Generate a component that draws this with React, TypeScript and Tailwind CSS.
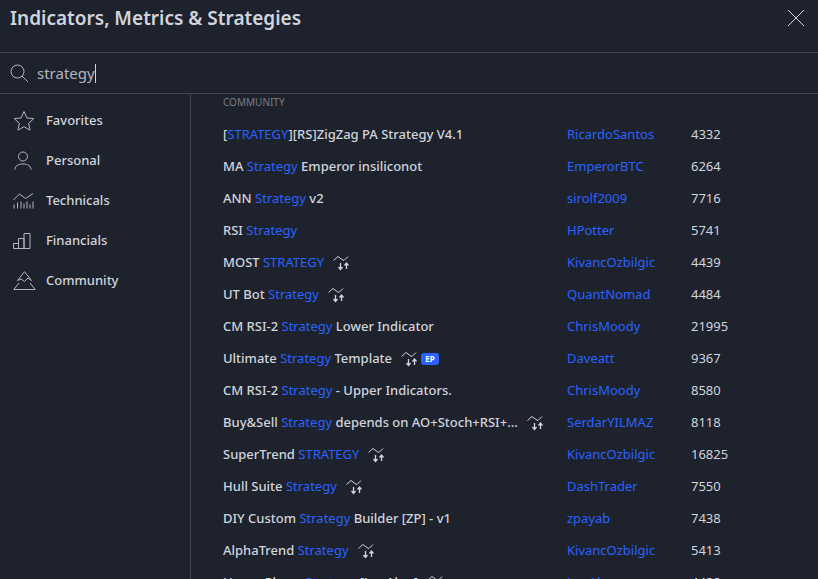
import React from "react"

const font = "font-['Noto_Sans','Open_Sans',sans-serif]"

type Part = string | { hl: string }
type Row = {
    title: Part[]
    author: string
    count: string
    strategy?: boolean
    ep?: boolean
}

const rows: Row[] = [
    { title: ["[", { hl: "STRATEGY" }, "][RS]ZigZag PA Strategy V4.1"], author: "RicardoSantos", count: "4332" },
    { title: ["MA ", { hl: "Strategy" }, " Emperor insiliconot"], author: "EmperorBTC", count: "6264" },
    { title: ["ANN ", { hl: "Strategy" }, " v2"], author: "sirolf2009", count: "7716" },
    { title: ["RSI ", { hl: "Strategy" }], author: "HPotter", count: "5741" },
    { title: ["MOST ", { hl: "STRATEGY" }], author: "KivancOzbilgic", count: "4439", strategy: true },
    { title: ["UT Bot ", { hl: "Strategy" }], author: "QuantNomad", count: "4484", strategy: true },
    { title: ["CM RSI-2 ", { hl: "Strategy" }, " Lower Indicator"], author: "ChrisMoody", count: "21995" },
    { title: ["Ultimate ", { hl: "Strategy" }, " Template"], author: "Daveatt", count: "9367", strategy: true, ep: true },
    { title: ["CM RSI-2 ", { hl: "Strategy" }, " - Upper Indicators."], author: "ChrisMoody", count: "8580" },
    { title: ["Buy&Sell ", { hl: "Strategy" }, " depends on AO+Stoch+RSI+..."], author: "SerdarYILMAZ", count: "8118", strategy: true },
    { title: ["SuperTrend ", { hl: "STRATEGY" }], author: "KivancOzbilgic", count: "16825", strategy: true },
    { title: ["Hull Suite ", { hl: "Strategy" }], author: "DashTrader", count: "7550", strategy: true },
    { title: ["DIY Custom ", { hl: "Strategy" }, " Builder [ZP] - v1"], author: "zpayab", count: "7438" },
    { title: ["AlphaTrend ", { hl: "Strategy" }], author: "KivancOzbilgic", count: "5413", strategy: true },
    { title: ["Heuer Phase ", { hl: "Strategy" }, " [LuxAlgo]"], author: "LuxAlgo", count: "4488", strategy: true },
]

function StrategyIcon() {
    return (
        <svg width="16" height="16" viewBox="0 0 16 16" fill="none" stroke="#d1d4dc" className="shrink-0">
            <path d="M.5 5.500 5 1.500 9 4.500 11 5.500 15 1.500" strokeWidth="1" />
            <path d="M7.500 8v6M5.500 12l2 2.500 2-2.500" strokeWidth="1.300" />
            <path d="M13.500 14V8M11.500 10.500l2-2.500 2 2.500" strokeWidth="1.300" />
        </svg>
    )
}

function StarIcon() {
    return (
        <svg width="22" height="22" viewBox="0 0 22 22" fill="none" stroke="#b2b5be">
            <path d="M11 1.500l2.900 6.400 6.800.8-5.100 4.600 1.500 6.900L11 16.700l-6.100 3.500 1.500-6.900L1.300 8.700l6.800-.8z" />
        </svg>
    )
}

function PersonIcon() {
    return (
        <svg width="20" height="20" viewBox="0 0 20 20" fill="none" stroke="#b2b5be">
            <circle cx="10" cy="5.500" r="4.500" />
            <path d="M2 18.500c0-3.500 3-5.500 8-5.500s8 2 8 5.500" />
        </svg>
    )
}

function TechnicalsIcon() {
    return (
        <svg width="21" height="16" viewBox="0 0 21 16" fill="none" stroke="#b2b5be">
            <path d="M.5 7 6.500 1l6 4.500L20 .5" />
            <path d="M1 15.500v-4M4.500 15.500v-6M8 15.500v-7M11 15.500v-5M14 15.500v-7M17 15.500v-4M20 15.500v-7" />
        </svg>
    )
}

function FinancialsIcon() {
    return (
        <svg width="18" height="16" viewBox="0 0 18 16" fill="none" stroke="#b2b5be">
            <path d="M.5 15.500v-5h5v5zM5.500 15.500v-10h5.500v10zM11 15.500V.5h6v15z" />
        </svg>
    )
}

function CommunityIcon() {
    return (
        <svg width="23" height="20" viewBox="0 0 23 20" fill="none" stroke="#b2b5be">
            <path d="M4.500 9.500 11.500.7l7 8.800-3.500-2.500-3.500 3.500L8 8z" />
            <path d="M6 12 .8 18.500h21.400L17 12" />
        </svg>
    )
}

const nav = [
    { label: "Favorites", icon: <StarIcon /> },
    { label: "Personal", icon: <PersonIcon /> },
    { label: "Technicals", icon: <TechnicalsIcon /> },
    { label: "Financials", icon: <FinancialsIcon /> },
    { label: "Community", icon: <CommunityIcon /> },
]

export default function App() {
    return (
        <div className={`${font} w-[818px] h-[579px] overflow-hidden bg-[#1e222d] text-[#d1d4dc] flex flex-col`}>
            <header className="h-[53px] shrink-0 flex items-start justify-between border-b border-[#434651] pl-[10px] pr-[13px]">
                <h1 className="text-[19px] leading-[24px] mt-[6px] font-semibold text-[#d1d4dc]">
                    Indicators, Metrics &amp; Strategies
                </h1>
                <svg width="18" height="18" viewBox="0 0 18 18" stroke="#d1d4dc" className="mt-[9px]">
                    <path d="M1 1l16 16M17 1 1 17" />
                </svg>
            </header>

            <div className="h-[41px] shrink-0 flex items-center border-b border-[#434651] pl-[10px]">
                <svg width="18" height="18" viewBox="0 0 18 18" fill="none" stroke="#b2b5be">
                    <circle cx="7.500" cy="7.500" r="6.500" />
                    <path d="M12 12l6 6" />
                </svg>
                <span className="ml-[9px] text-[15px] leading-[20px] text-[#b2b5be]">strategy</span>
                <span className="w-px h-[19px] bg-[#d1d4dc]" />
            </div>

            <div className="flex-1 min-h-0 flex">
                <nav className="w-[191px] shrink-0 border-r border-[#434651] pt-[7px]">
                    {nav.map((item) => (
                        <div key={item.label} className="h-[40px] flex items-center">
                            <span className="w-[46px] pl-[13px] flex justify-start items-center">{item.icon}</span>
                            <span className="text-[13px] font-medium text-[#d1d4dc]">{item.label}</span>
                        </div>
                    ))}
                </nav>

                <main className="flex-1 min-w-0 pl-[32px]">
                    <div className="text-[10px] leading-[16px] h-[16px] text-[#787b86]">COMMUNITY</div>
                    <div className="pt-[9px]">
                        {rows.map((row) => (
                            <div key={row.author + row.count} className="h-[32px] flex items-center text-[13px] whitespace-nowrap">
                                <div className="w-[344px] flex items-center font-medium">
                                    <span className="text-[#d1d4dc]">
                                        {row.title.map((part, i) =>
                                            typeof part === "string" ? (
                                                <span key={i}>{part}</span>
                                            ) : (
                                                <span key={i} className="text-[#2962ff] font-normal">{part.hl}</span>
                                            )
                                        )}
                                    </span>
                                    {row.strategy && (
                                        <span className="ml-[9px]">
                                            <StrategyIcon />
                                        </span>
                                    )}
                                    {row.ep && (
                                        <span className="ml-[4px] w-[18px] h-[12px] rounded-[3px] bg-[#2962ff] text-white text-[8px] leading-[12px] font-bold text-center">
                                            EP
                                        </span>
                                    )}
                                </div>
                                <div className="w-[124px] text-[#2962ff]">{row.author}</div>
                                <div className="text-[#d1d4dc]">{row.count}</div>
                            </div>
                        ))}
                    </div>
                </main>
            </div>
        </div>
    )
}
